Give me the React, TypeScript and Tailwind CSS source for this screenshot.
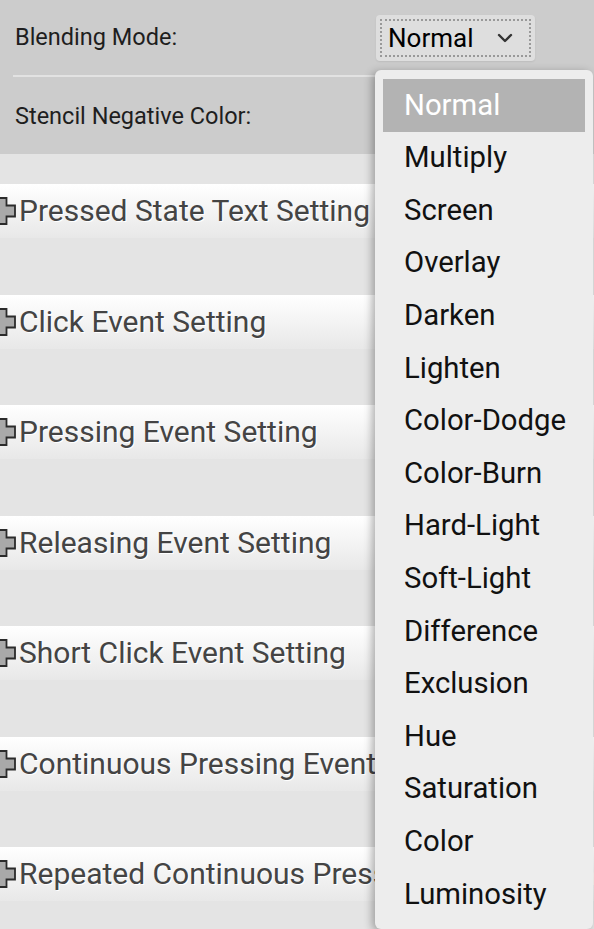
import { ChevronDown } from "lucide-react";

const sections = [
  "Pressed State Text Setting",
  "Click Event Setting",
  "Pressing Event Setting",
  "Releasing Event Setting",
  "Short Click Event Setting",
  "Continuous Pressing Event Setting",
  "Repeated Continuous Pressing Event Setting",
];

const modes = [
  "Normal",
  "Multiply",
  "Screen",
  "Overlay",
  "Darken",
  "Lighten",
  "Color-Dodge",
  "Color-Burn",
  "Hard-Light",
  "Soft-Light",
  "Difference",
  "Exclusion",
  "Hue",
  "Saturation",
  "Color",
  "Luminosity",
];

function PlusIcon() {
  return (
    <svg width="34" height="34" viewBox="0 0 34 34" className="shrink-0 -ml-[16px]">
      <path
        d="M11.5 4 H22.5 V11.5 H31 V22.5 H22.5 V30 H11.5 V22.5 H3 V11.5 H11.5 Z"
        fill="#a9a9a9"
        stroke="#2b2b2b"
        strokeWidth="1.8"
      />
    </svg>
  );
}

export default function App() {
  return (
    <div className="relative h-[929px] w-full overflow-hidden bg-[#e4e4e4] font-['Roboto',sans-serif]">
      {/* Properties panel */}
      <div className="bg-[#cccccc] px-[15px]">
        <div className="flex h-[75px] items-center justify-between pt-[1px]">
          <span className="text-[23.5px] text-[#1e1e1e]">Blending Mode:</span>
          <button className="mr-[44px] flex h-[46px] w-[159px] items-center rounded-[4px] bg-[#dedede] px-[4px] shadow-[0_1px_2px_rgba(0,0,0,0.08)]">
            <span className="flex h-[38px] w-full items-center justify-between border-2 border-dotted border-[#999] pl-[6px] pr-[12px]">
              <span className="text-[26px] leading-none text-black">Normal</span>
              <ChevronDown className="h-[24px] w-[24px] text-[#333]" strokeWidth={2.4} />
            </span>
          </button>
        </div>
        <div className="-ml-[2px] h-[2px] bg-[#e2e2e2]" />
        <div className="flex h-[77px] items-center pt-[2px]">
          <span className="text-[23.5px] text-[#1e1e1e]">Stencil Negative Color:</span>
        </div>
      </div>

      {/* Collapsed sections */}
      <div className="flex flex-col gap-[56.5px] pt-[30px]">
        {sections.map((s) => (
          <div
            key={s}
            className="flex h-[54px] items-center bg-gradient-to-b from-white to-[#e8e8e8] whitespace-nowrap"
          >
            <PlusIcon />
            <span className="ml-[1px] text-[30px] leading-none text-[#444] [text-shadow:1px_1px_0_#fff]">
              {s}
            </span>
          </div>
        ))}
      </div>

      {/* Open dropdown */}
      <div className="absolute left-[375px] top-[70px] w-[218px] rounded-[6px] bg-[#ededed] px-[8px] pb-[8px] pt-[9px] shadow-[-3px_2px_8px_rgba(0,0,0,0.3)]">
        {modes.map((m, i) => (
          <div
            key={m}
            className={`flex h-[52.6px] items-center pl-[21px] text-[29.3px] leading-none ${
              i === 0 ? "bg-[#b3b3b3] text-white" : "text-[#111]"
            }`}
          >
            {m}
          </div>
        ))}
      </div>
    </div>
  );
}
